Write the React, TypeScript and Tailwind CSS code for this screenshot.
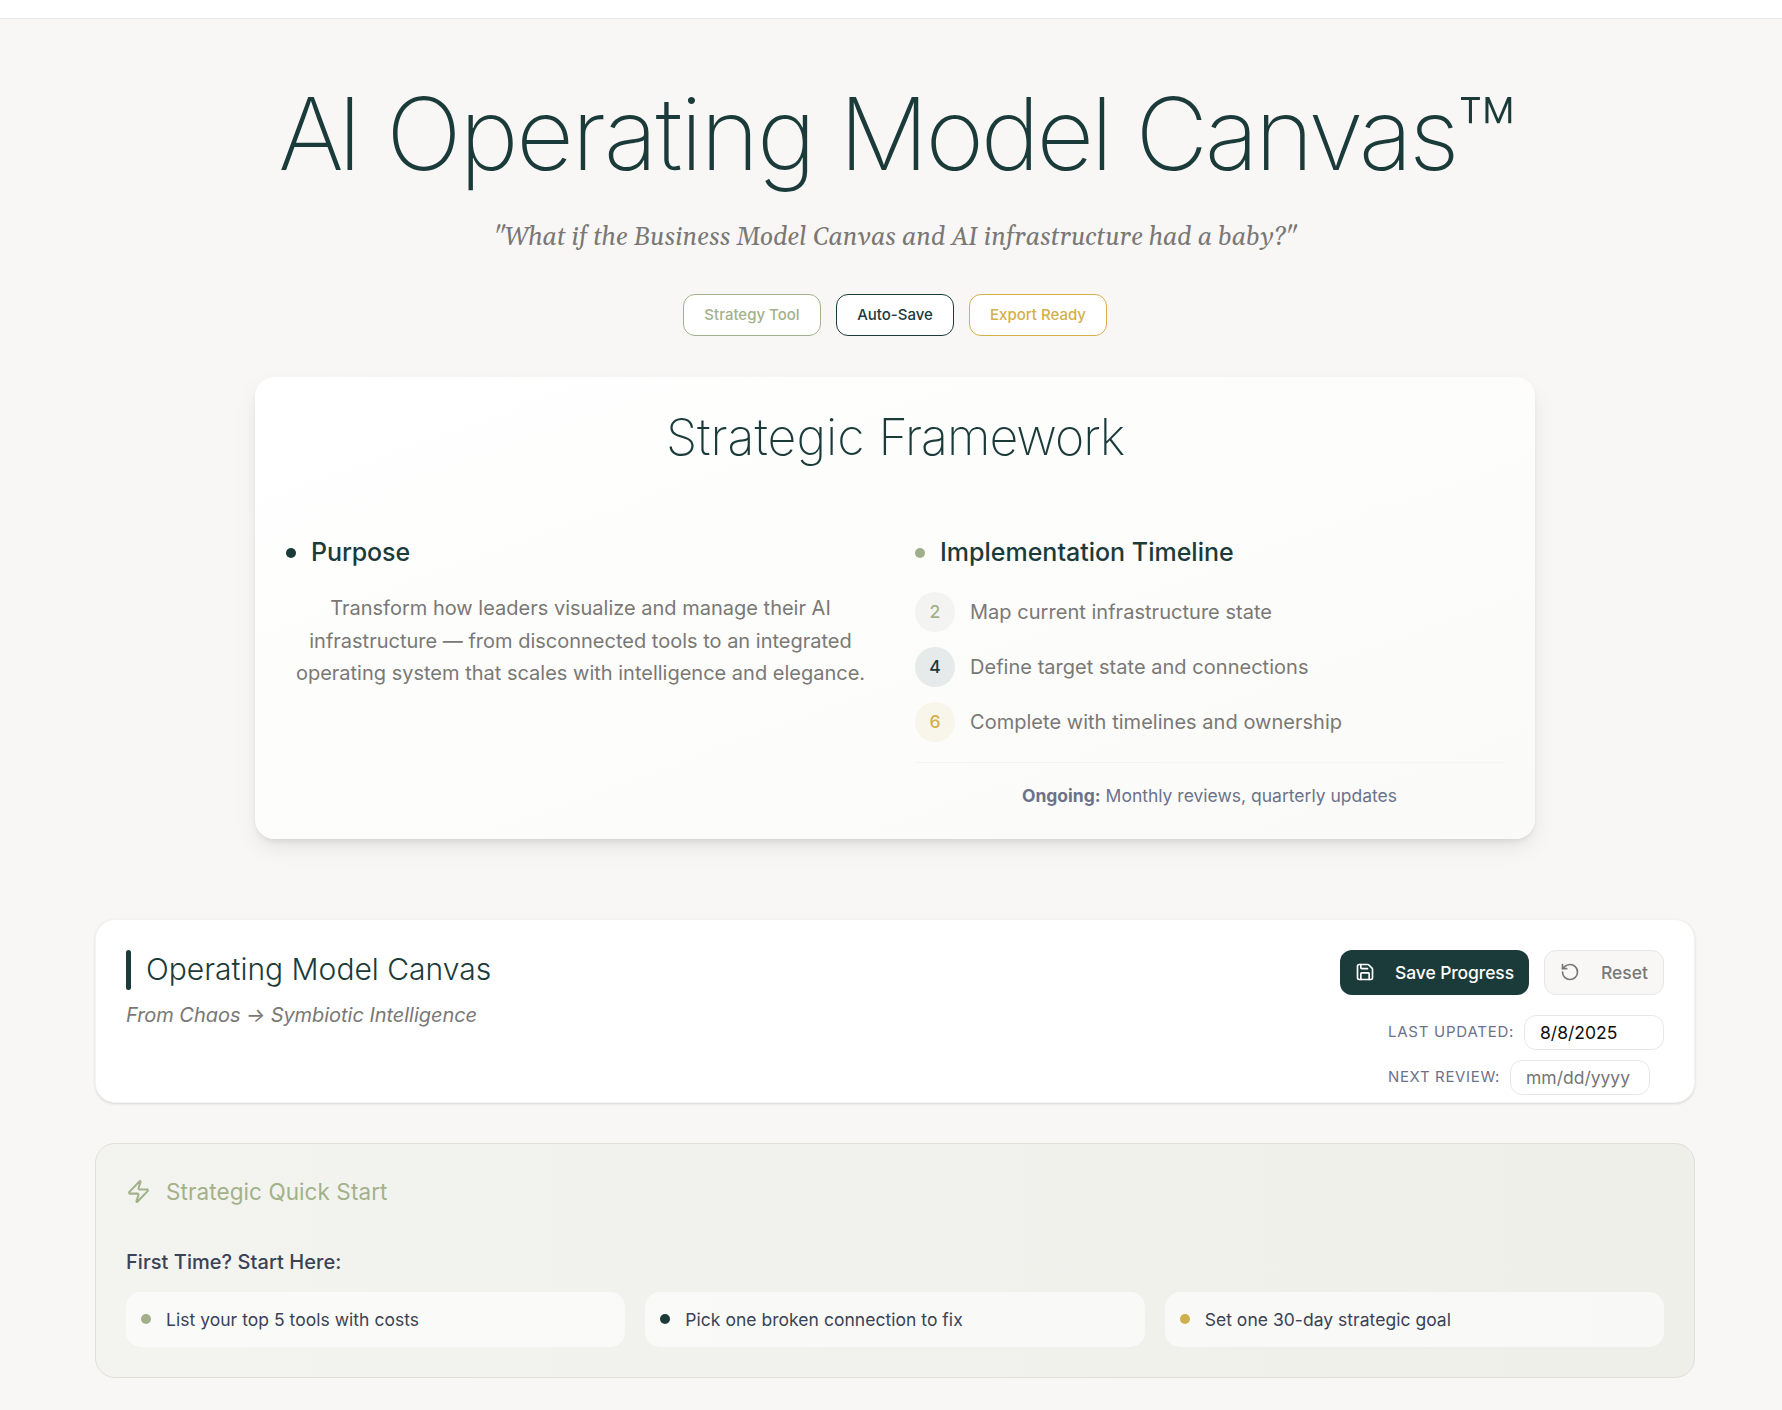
import { Save, RotateCcw, Zap } from "lucide-react";

const badges = [
  { label: "Strategy Tool", tone: "border-[#a3b18a] text-[#a3b18a] w-[138px]" },
  { label: "Auto-Save", tone: "border-[#1b3b3a] text-[#1b3b3a] w-[118px]" },
  { label: "Export Ready", tone: "border-[#d4af4a] text-[#d4af4a] w-[138px]" },
];

const steps = [
  { n: "2", text: "Map current infrastructure state", tone: "bg-[#f3f4f1] text-[#a3b18a]" },
  { n: "4", text: "Define target state and connections", tone: "bg-[#e6eaea] text-[#1b3b3a]" },
  { n: "6", text: "Complete with timelines and ownership", tone: "bg-[#f8f5ea] text-[#d4af4a]" },
];

const starts = [
  { text: "List your top 5 tools with costs", dot: "bg-[#a1af8b]" },
  { text: "Pick one broken connection to fix", dot: "bg-[#1b3b3a]" },
  { text: "Set one 30-day strategic goal", dot: "bg-[#ceb04e]" },
];

function Hero() {
  return (
    <header className="flex flex-col items-center pt-[65px]">
      <h1 className="h-[100px] whitespace-nowrap pl-[4px] text-[100px] font-extralight leading-[100px] tracking-[-2.5px] text-[#1b3b3a]">
        <span className="mr-[5px] tracking-[-6.9px]">AI</span>{" "}
        <span className="tracking-[-2.16px]">Operating</span>{" "}
        <span className="-ml-[0.7px] tracking-[-3.3px]">Model</span>{" "}
        <span className="tracking-[-3.4px]">Canvas</span>
        <span className="ml-[0.7px] tracking-normal">™</span>
      </h1>
      <p className="mt-[34px] h-[40px] whitespace-nowrap font-[Gelasio,Georgia,serif] text-[25px] italic leading-[40px] tracking-[-0.02px] text-[#7a7875]">
        "What if the Business Model Canvas and AI infrastructure had a baby?"
      </p>
      <div className="mt-[36px] flex gap-[15px]">
        {badges.map((b) => (
          <span
            key={b.label}
            className={`flex h-[42px] items-center justify-center whitespace-nowrap rounded-[12px] border bg-white text-[15px] font-medium ${b.tone}`}
          >
            {b.label}
          </span>
        ))}
      </div>
    </header>
  );
}

function Framework() {
  return (
    <section className="mx-auto mt-[41px] h-[462px] w-[1280px] rounded-[20px] bg-linear-to-br from-white to-[#fafaf8] px-[31px] shadow-[0_10px_25px_-3px_rgba(0,0,0,0.09),0_4px_6px_-2px_rgba(0,0,0,0.09)]">
      <h2 className="pt-[30px] text-center text-[50px] font-extralight leading-[60px] text-[#1b3b3a]">
        Strategic <span className="tracking-[-1px]">Framework</span>
      </h2>
      <div className="mt-[68px] grid grid-cols-2 gap-[40px]">
        <div>
          <h3 className="flex h-[36px] items-center gap-[15px] text-[25px] font-medium tracking-[-0.1px] text-[#1b3b3a]">
            <i className="size-[10px] rounded-full bg-[#1b3b3a]" />
            Purpose
          </h3>
          <p className="mt-[21px] text-center text-[20px] leading-[32.5px] text-[#7a7875]">
            Transform how leaders visualize and manage their AI
            <br />
            infrastructure — from disconnected tools to an integrated
            <br />
            operating system that scales with intelligence and elegance.
          </p>
        </div>
        <div>
          <h3 className="flex h-[36px] items-center gap-[15px] text-[25px] font-medium text-[#1b3b3a]">
            <i className="size-[10px] rounded-full bg-[#a1af8b]" />
            Implementation Timeline
          </h3>
          <ul className="mt-[21px] flex flex-col gap-[15px]">
            {steps.map((s) => (
              <li key={s.n} className="flex h-[40px] items-center gap-[15px] text-[20px] tracking-[0.03px] text-[#7a7875]">
                <b className={`flex size-[40px] items-center justify-center rounded-full text-[17.5px] font-medium ${s.tone}`}>
                  {s.n}
                </b>
                {s.text}
              </li>
            ))}
          </ul>
          <p className="mt-[20px] border-t border-[#f3f4f3] pt-[19px] text-center text-[17.5px] leading-[28px] text-[#6b7289]">
            <b className="font-bold">Ongoing:</b> Monthly reviews, quarterly updates
          </p>
        </div>
      </div>
    </section>
  );
}

function CanvasHeader() {
  return (
    <section className="mx-auto mt-[80px] flex h-[184px] w-[1600px] justify-between rounded-[20px] border border-[#f3f3f2] bg-white p-[30px] shadow-[0_1px_3px_rgba(0,0,0,0.1),0_1px_2px_-1px_rgba(0,0,0,0.1)]">
      <div>
        <h2 className="flex h-[40px] items-center gap-[15px] text-[30px] font-light text-[#1b3b3a]">
          <i className="h-[40px] w-[5px] rounded-full bg-[#1b3b3a]" />
          <span className="pb-[2px]">Operating Model Canvas</span>
        </h2>
        <p className="mt-[10px] text-[20px] italic leading-[30px] tracking-[-0.04px] text-[#7a7875]">
          From Chaos → Symbiotic Intelligence
        </p>
      </div>
      <div className="flex w-[324px] flex-col">
        <div className="flex gap-[15px] text-[17.5px] font-medium">
          <button className="flex h-[45px] w-[189px] items-center justify-between whitespace-nowrap rounded-[12px] bg-[#1b3b3a] px-[15px] text-white">
            <Save className="mb-px size-[20px]" strokeWidth={2} />
            <span className="pt-px tracking-[-0.1px]">Save Progress</span>
          </button>
          <button className="flex h-[45px] w-[120px] items-center justify-between rounded-[12px] border border-[#e5e7eb] bg-[#f8f7f5] px-[15px] text-[#7a7875]">
            <RotateCcw className="mb-px size-[20px]" strokeWidth={2} />
            <span className="pt-px">Reset</span>
          </button>
        </div>
        <div className="ml-[48px] mt-[20px] flex flex-col gap-[10px] text-[15px] text-[#6b7289]">
          <label className="flex items-center gap-[10px] whitespace-nowrap tracking-[0.75px]">
            <span className="w-[126px]">LAST UPDATED:</span>
            <input
              defaultValue="8/8/2025"
              className="h-[35px] w-[140px] rounded-[12px] border border-[#e5e7eb] bg-white px-[15px] text-[17.5px] tracking-normal text-[#0d0d0d]"
            />
          </label>
          <label className="flex items-center gap-[10px] whitespace-nowrap tracking-[0.65px]">
            <span className="w-[112px]">NEXT REVIEW:</span>
            <input
              placeholder="mm/dd/yyyy"
              className="h-[35px] w-[140px] rounded-[12px] border border-[#e5e7eb] bg-white px-[15px] text-[17.5px] tracking-normal placeholder:text-[#757575]"
            />
          </label>
        </div>
      </div>
    </section>
  );
}

function QuickStart() {
  return (
    <section className="mx-auto mt-[40px] h-[235px] w-[1600px] rounded-[20px] border border-[#dfe1d8] bg-linear-to-r from-[#f3f4ef] to-[#eeefe9] px-[30px] pt-[30px]">
      <h2 className="flex h-[36px] items-center gap-[15px] text-[22.5px] tracking-[0.08px] text-[#a3b18a]">
        <Zap className="mb-[2px] size-[25px]" strokeWidth={2} />
        Strategic Quick Start
      </h2>
      <h3 className="mt-[37px] text-[20px] font-medium leading-[30px] tracking-[0.05px] text-[#3a4256]">
        First Time? Start Here:
      </h3>
      <ul className="mt-[15px] grid grid-cols-3 gap-[20px]">
        {starts.map((s) => (
          <li
            key={s.text}
            className="flex h-[55px] items-center gap-[15px] rounded-[15px] bg-white/60 px-[15px] text-[17.5px] tracking-[0.03px] text-[#3a4256]"
          >
            <i className={`mb-px size-[10px] rounded-full ${s.dot}`} />
            <span className="pt-px">{s.text}</span>
          </li>
        ))}
      </ul>
    </section>
  );
}

export default function App() {
  return (
    <div className="h-[1410px] w-full overflow-hidden bg-[#f8f7f5] font-[Inter,sans-serif]">
      <div className="w-[1790px]">
        <div className="h-[19px] border-b border-[#e5e7eb] bg-white" />
        <Hero />
        <Framework />
        <CanvasHeader />
        <QuickStart />
      </div>
    </div>
  );
}
